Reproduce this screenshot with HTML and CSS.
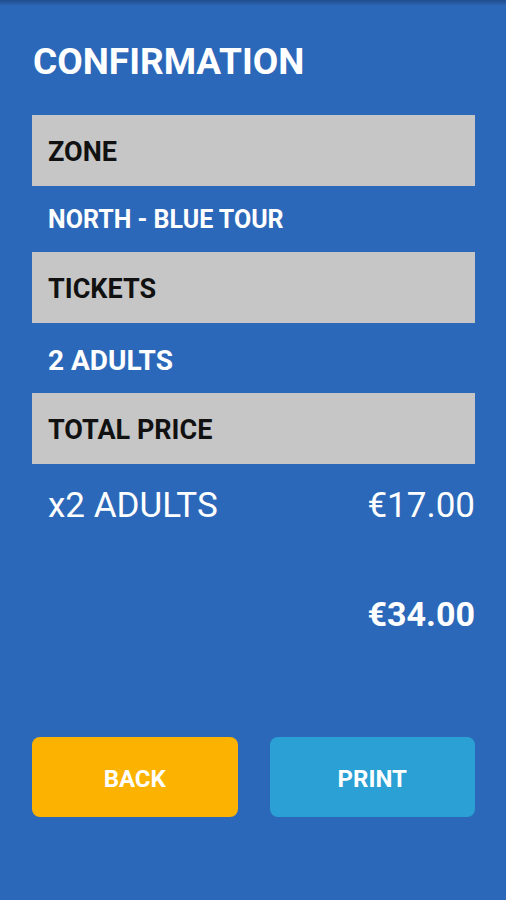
FILE: index.html
```html
<!DOCTYPE html>
<html>
<head>
<meta charset="utf-8">
<link rel="stylesheet" href="styles.css">
</head>
<body>
<div class="screen">
  <div class="top-shade"></div>
  <h1 class="title">CONFIRMATION</h1>
  <div class="label-bar">ZONE</div>
  <div class="value-row">NORTH - BLUE TOUR</div>
  <div class="label-bar">TICKETS</div>
  <div class="value-row tall">2 ADULTS</div>
  <div class="label-bar">TOTAL PRICE</div>
  <div class="price-row"><span>x2 ADULTS</span><span>€17.00</span></div>
  <div class="total-row"><span>€34.00</span></div>
  <div class="buttons">
    <button class="btn back">BACK</button>
    <button class="btn print">PRINT</button>
  </div>
</div>
</body>
</html>
```
FILE: styles.css
```css
html, body {
  margin: 0;
  padding: 0;
  background: #2c68b9;
}
body {
  font-family: Roboto, "Noto Sans", sans-serif;
  color: #fff;
}
.screen {
  position: relative;
  height: 900px;
  box-sizing: border-box;
  padding: 0 31px 0 32px;
  display: flex;
  flex-direction: column;
}
.top-shade {
  position: absolute;
  left: 0;
  right: 0;
  top: 0;
  height: 6px;
  background: linear-gradient(#1f4c8c, rgba(44, 104, 185, 0));
}
.title {
  margin: 40px 0 31px 1px;
  font-size: 37px;
  line-height: 44px;
  font-weight: 700;
  color: #fff;
}
.label-bar {
  height: 71px;
  box-sizing: border-box;
  background: #c6c6c6;
  color: #111;
  font-size: 27px;
  font-weight: 700;
  display: flex;
  align-items: center;
  padding: 3px 0 0 16px;
}
.value-row {
  height: 66px;
  box-sizing: border-box;
  display: flex;
  align-items: center;
  padding: 1px 0 0 16px;
  font-size: 25px;
  font-weight: 700;
}
.value-row.tall {
  height: 70px;
  padding-top: 4px;
  font-size: 28px;
}
.price-row {
  height: 82px;
  display: flex;
  align-items: center;
  justify-content: space-between;
  padding-left: 16px;
  font-size: 35px;
  font-weight: 400;
}
.total-row {
  height: 136px;
  display: flex;
  align-items: center;
  justify-content: flex-end;
  font-size: 34px;
  font-weight: 700;
}
.buttons {
  margin-top: 55px;
  display: grid;
  grid-template-columns: 1fr 1fr;
  gap: 32px;
}
.btn {
  height: 80px;
  border: none;
  border-radius: 8px;
  padding-top: 4px;
  color: #fff;
  font-family: Roboto, "Noto Sans", sans-serif;
  font-size: 24px;
  font-weight: 700;
}
.back {
  background: #fbb200;
}
.print {
  background: #2aa0d4;
}
```
